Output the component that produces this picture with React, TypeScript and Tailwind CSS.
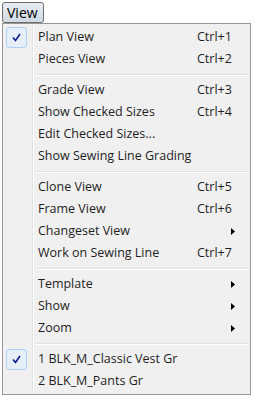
import React from "react";

type Item = {
  label?: string;
  shortcut?: string;
  checked?: boolean;
  submenu?: boolean;
  sep?: boolean;
};

const items: Item[] = [
  { label: "Plan View", shortcut: "Ctrl+1", checked: true },
  { label: "Pieces View", shortcut: "Ctrl+2" },
  { sep: true },
  { label: "Grade View", shortcut: "Ctrl+3" },
  { label: "Show Checked Sizes", shortcut: "Ctrl+4" },
  { label: "Edit Checked Sizes..." },
  { label: "Show Sewing Line Grading" },
  { sep: true },
  { label: "Clone View", shortcut: "Ctrl+5" },
  { label: "Frame View", shortcut: "Ctrl+6" },
  { label: "Changeset View", submenu: true },
  { label: "Work on Sewing Line", shortcut: "Ctrl+7" },
  { sep: true },
  { label: "Template", submenu: true },
  { label: "Show", submenu: true },
  { label: "Zoom", submenu: true },
  { sep: true },
  { label: "1 BLK_M_Classic Vest Gr", checked: true },
  { label: "2 BLK_M_Pants Gr" },
];

const Gutter = ({ children }: { children?: React.ReactNode }) => (
  <div className="flex h-full shrink-0">
    <div className="w-[28px] flex items-center pl-[2px]">{children}</div>
    <div className="w-px h-full bg-[#e2e3e3]" />
    <div className="w-px h-full bg-white" />
  </div>
);

const Check = () => (
  <div className="w-[21px] h-[21px] rounded-[3px] border border-[#aecff7] bg-[#e6eef9] flex items-center justify-center">
    <svg width="9" height="9" viewBox="0 0 9 9">
      <path d="M1 4.5 L3.5 7.5 L8 1" fill="none" stroke="#0c1b8f" strokeWidth="1.6" />
    </svg>
  </div>
);

const Arrow = () => (
  <svg width="4" height="7" viewBox="0 0 4 7">
    <path d="M0 0 L4 3.5 L0 7 Z" fill="#000" />
  </svg>
);

export default function App() {
  return (
    <div className="w-[254px] h-[397px] bg-white font-['Segoe_UI','Open_Sans',sans-serif] text-[12.5px] text-[#1e1e1e] leading-none">
      <div className="pt-[2px] pl-[2px] h-[23px]">
        <div className="w-[42px] h-[21px] rounded-[3px] border border-[#6d6d6d] bg-gradient-to-b from-[#e6ecf3] to-[#d1dae5] flex items-center pl-[4px] text-[14px] text-black">
          View
        </div>
      </div>
      <div className="ml-[2px] w-[249px] border border-[#979797] bg-[#f0f0f0] py-[2px] pl-px pr-[2px]">
        {items.map((it, i) =>
          it.sep ? (
            <div key={i} className="flex h-[9px]">
              <Gutter />
              <div className="flex-1 flex flex-col justify-center pl-[1px]">
                <div className="h-px bg-[#e2e3e3]" />
                <div className="h-px bg-white" />
              </div>
            </div>
          ) : (
            <div key={i} className="flex h-[22px] items-center">
              <Gutter>{it.checked && <Check />}</Gutter>
              <div className="flex-1 pl-[4px] pt-px">{it.label}</div>
              {it.shortcut && <div className="w-[51px] pt-px">{it.shortcut}</div>}
              {it.submenu && (
                <div className="w-[51px] flex justify-end pr-[13px]">
                  <Arrow />
                </div>
              )}
            </div>
          )
        )}
      </div>
    </div>
  );
}
